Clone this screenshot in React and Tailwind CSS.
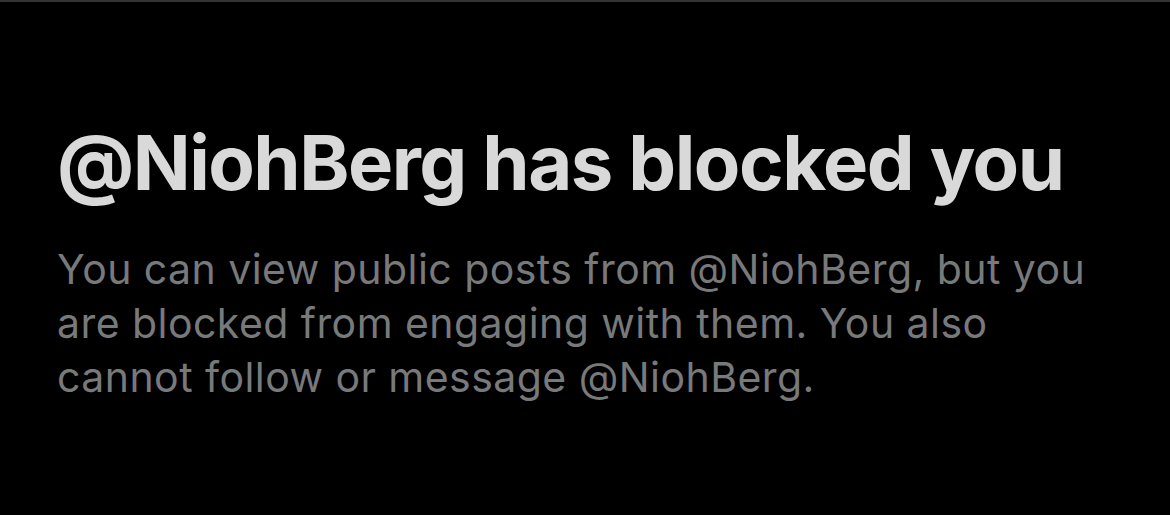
import React from "react";

const App = () => {
  return (
    <div
      className="w-[1170px] h-[515px] bg-black border-t-2 border-[#333333] overflow-hidden"
      style={{ fontFamily: "Inter, 'Noto Sans', sans-serif" }}
    >
      <div className="pl-[57px] pr-[60px] pt-[115px]">
        <h1 className="text-[76px] leading-[90px] font-bold text-[#d9d9d9] tracking-[-1.5px] whitespace-nowrap">
          @NiohBerg has blocked you
        </h1>
        <p className="mt-[35px] text-[41px] leading-[54px] text-[#77797b] tracking-[0.45px] whitespace-nowrap">
          You can view public posts from @NiohBerg, but you
          <br />
          are blocked from engaging with them. You also
          <br />
          cannot follow or message @NiohBerg.
        </p>
      </div>
    </div>
  );
};

export default App;
